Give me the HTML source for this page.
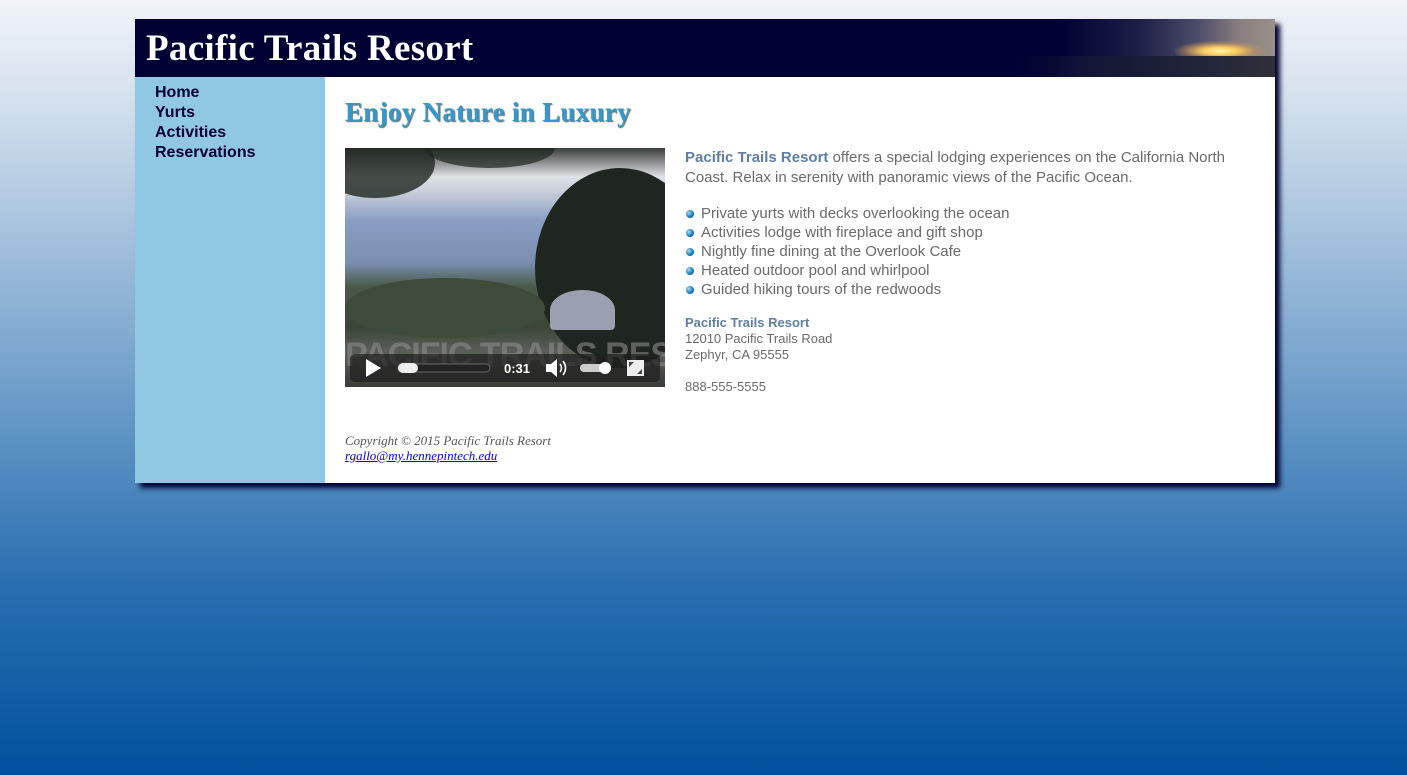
<!DOCTYPE html>
<html><head><style>
html,body{margin:0;height:775px;overflow:hidden}
body{background:linear-gradient(to bottom,#f1f4f8 0%,#d6e2ee 12%,#6f9fca 50%,#2a6fb0 75%,#00509d 100%);font-family:"Liberation Sans",Arial,sans-serif}
#w{position:absolute;left:135px;top:19px;width:1140px;height:464px;background:#fff;box-shadow:5px 5px 5px #000033}
#h{height:58px;background:linear-gradient(to right,#000033 0%,#000033 81%,#1c1f45 88%,#4a4a68 93%,#8a7f80 97%,#9a9088 100%);position:relative;overflow:hidden}
#sun{position:absolute;right:10px;top:22px;width:90px;height:20px;background:radial-gradient(ellipse at 50% 50%,#fff4b0 0%,#ffd060 25%,rgba(200,150,90,.5) 55%,rgba(0,0,0,0) 75%)}
#h:after{content:"";position:absolute;right:0;top:37px;width:260px;height:21px;background:linear-gradient(to right,rgba(0,0,51,0),#151a35 40%,#25283a 80%,#303038)}
#h h1{margin:0;position:absolute;left:11px;top:8px;font-family:"Liberation Serif",Georgia,serif;color:#fff;font-size:37px;font-weight:bold;letter-spacing:0.3px}
#nav{position:absolute;left:0;top:58px;width:190px;height:406px;background:#90c7e3}
#nav a{display:block;color:#000033;font-weight:bold;font-size:16px;line-height:20px;text-decoration:none;padding-left:20px}
#nav div{padding-top:6px}
#m{position:absolute;left:210px;top:58px}
h2{position:absolute;left:0;top:20px;margin:0;font-family:"Liberation Serif",Georgia,serif;color:#3399cc;font-size:27px;letter-spacing:0.3px;text-shadow:1px 1px 1px #666;white-space:nowrap}
#v{position:absolute;left:0;top:71px;width:320px;height:239px;overflow:hidden;background:linear-gradient(to bottom,#3a3d3a 0%,#dfe2e6 12%,#c9d0da 18%,#8b9fc4 30%,#7a8eb0 48%,#4a5a48 58%,#3a4636 75%,#5a5e58 85%,#3a3c38 100%)}
.tr{position:absolute;border-radius:50%;background:#1f251f}
#ctrl{position:absolute;left:5px;top:206px;width:310px;height:28px;background:rgba(30,30,30,.7);border-radius:5px;color:#fff;font-size:13px;font-weight:bold}
#wm{position:absolute;left:0;top:188px;width:320px;font:bold 34px "Liberation Sans",sans-serif;color:rgba(140,140,140,.6);white-space:nowrap;letter-spacing:-1px}
#t{position:absolute;left:340px;top:71px;width:570px;color:#6a6a6a;font-size:15px;line-height:20px}
#t b{color:#5c7fa3}
ul{list-style:none;margin:16px 0 0;padding:0;line-height:19px}
li{padding-left:16px;position:relative}
li:before{content:"";position:absolute;left:1px;top:6px;width:8px;height:8px;border-radius:50%;background:radial-gradient(circle at 35% 35%,#9de0ff,#1473b5 60%,#0a3d6a)}
#a{margin-top:16px;font-size:13px;line-height:16px}
#f{position:absolute;left:210px;top:414px;font-family:"Liberation Serif",Georgia,serif;font-style:italic;font-size:13px;color:#555;line-height:15px}
#f a{color:#00f;text-decoration:underline}
</style></head><body>
<div id="w">
<div id="h"><div id="sun"></div><h1>Pacific Trails Resort</h1></div>
<div id="nav"><div><a>Home</a><a>Yurts</a><a>Activities</a><a>Reservations</a></div></div>
<div id="m">
<h2>Enjoy Nature in Luxury</h2>
<div id="v">
<div class="tr" style="left:190px;top:20px;width:170px;height:200px"></div>
<div class="tr" style="left:-30px;top:-20px;width:120px;height:70px;opacity:.8"></div>
<div class="tr" style="left:80px;top:-20px;width:130px;height:40px;opacity:.7"></div>
<div class="tr" style="left:0;top:130px;width:200px;height:60px;background:#3e4a3a"></div>
<div style="position:absolute;left:205px;top:142px;width:65px;height:40px;background:#9aa0b0;border-radius:50% 50% 4px 4px"></div>
<div id="wm">PACIFIC TRAILS RESORT</div>
<div id="ctrl">
<svg width="310" height="28" style="position:absolute;left:0;top:0">
<polygon points="16,5 16,23 31,14" fill="#fff"/>
<rect x="48" y="10" width="92" height="8" rx="4" fill="#222" stroke="#666"/>
<rect x="48" y="9" width="20" height="10" rx="5" fill="#eee"/>
<text x="154" y="19" fill="#fff" font-size="13" font-weight="bold" font-family="Liberation Sans">0:31</text>
<polygon points="196,10 201,10 207,5 207,23 201,18 196,18" fill="#fff"/>
<path d="M210,10 q3,4 0,8 M213,7 q5,7 0,14" stroke="#fff" stroke-width="1.6" fill="none"/>
<rect x="230" y="10" width="30" height="8" rx="4" fill="#ccc"/>
<circle cx="255" cy="14" r="6" fill="#fff"/>
<rect x="277" y="6" width="17" height="16" fill="#eee"/>
<path d="M279,8 l5,0 l-5,5z M292,20 l-5,0 l5,-5z" fill="#444"/>
</svg></div></div>
<div id="t"><b>Pacific Trails Resort</b> offers a special lodging experiences on the California North Coast. Relax in serenity with panoramic views of the Pacific Ocean.
<ul><li>Private yurts with decks overlooking the ocean</li><li>Activities lodge with fireplace and gift shop</li><li>Nightly fine dining at the Overlook Cafe</li><li>Heated outdoor pool and whirlpool</li><li>Guided hiking tours of the redwoods</li></ul>
<div id="a"><b>Pacific Trails Resort</b><br>12010 Pacific Trails Road<br>Zephyr, CA 95555<br><br>888-555-5555</div></div>
</div>
<div id="f">Copyright © 2015 Pacific Trails Resort<br><a>rgallo@my.hennepintech.edu</a></div>
</div>
</body></html>
